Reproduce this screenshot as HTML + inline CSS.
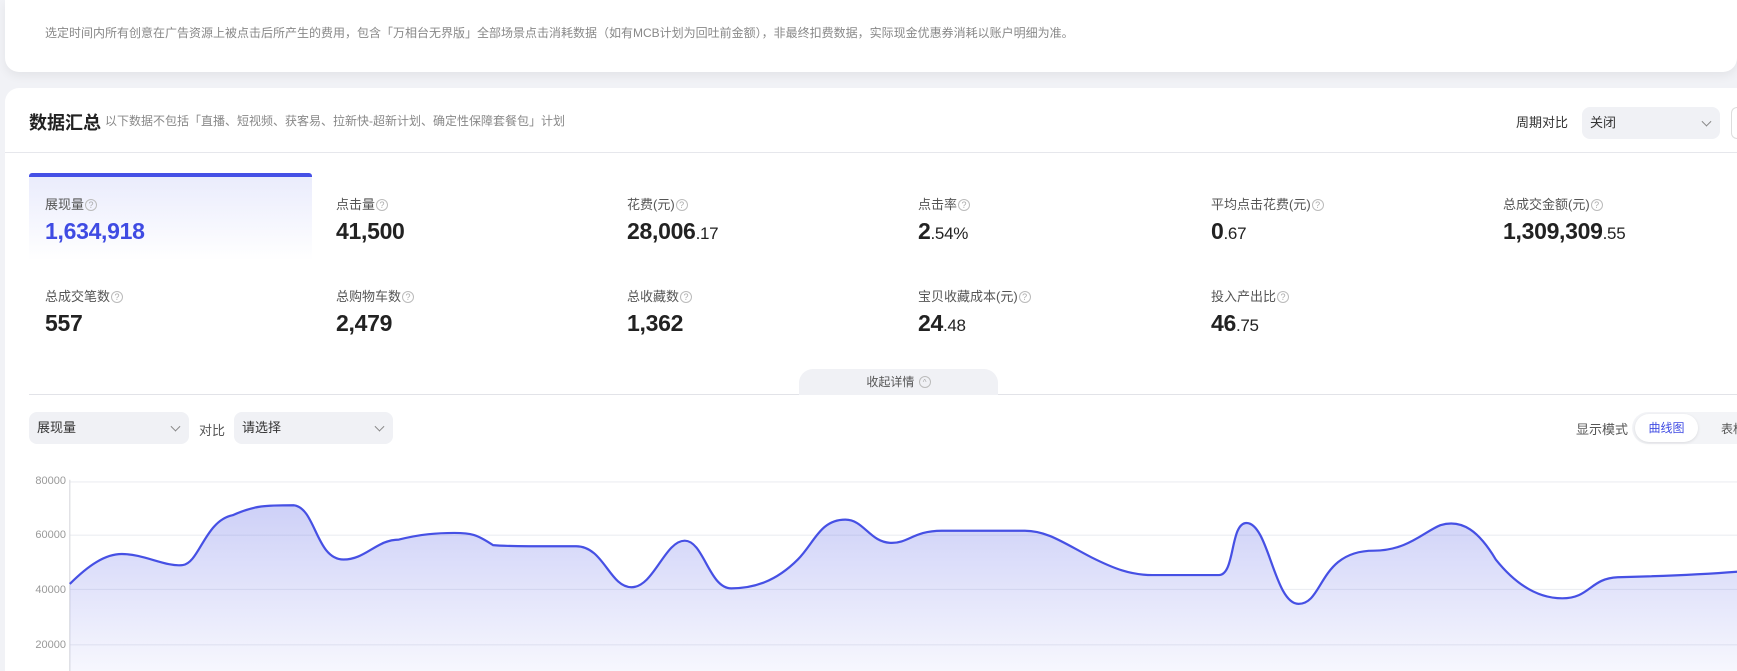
<!DOCTYPE html>
<html style="width:1737px;height:671px;overflow:hidden"><head><meta charset="utf-8"><style>
*{margin:0;padding:0;box-sizing:border-box}
body{width:1737px;height:671px;overflow:hidden;background:#f1f2f6;font-family:"Liberation Sans","Noto Sans CJK SC",sans-serif;color:#333;position:relative}
.a{position:absolute;white-space:nowrap}
.card1{position:absolute;left:5px;top:0;width:1732px;height:72px;background:#fff;border-radius:0 0 14px 14px;box-shadow:0 4px 10px rgba(0,0,0,.06)}
.card2{position:absolute;left:5px;top:88px;width:1732px;height:583px;background:#fff;border-radius:14px 0 0 0}
.lbl{font-size:13px;color:#555}
.q{display:inline-block;width:12px;height:12px;border:1px solid #bbb;border-radius:50%;font-size:9px;color:#aaa;text-align:center;line-height:10px;vertical-align:1px;margin-left:1px}
.val{font-size:23px;font-weight:bold;color:#222;letter-spacing:-0.3px}
.val small{font-size:17px;font-weight:normal}
.sel{position:absolute;background:#f0f1f5;border-radius:8px;font-size:13px;color:#333;padding-left:8px}
.arr{position:absolute;right:10px;top:50%;width:7px;height:7px;border-right:1px solid #888;border-bottom:1px solid #888;transform:translateY(-70%) rotate(45deg)}
.yl{font-size:11px;color:#999;right:1671px;text-align:right}
</style></head><body>
<div class="card1"></div>
<div class="a" style="left:45px;top:24px;font-size:12px;color:#888">选定时间内所有创意在广告资源上被点击后所产生的费用，包含「万相台无界版」全部场景点击消耗数据（如有MCB计划为回吐前金额），非最终扣费数据，实际现金优惠券消耗以账户明细为准。</div>
<div class="card2"></div>
<div class="a" style="left:29px;top:109px;font-size:18px;font-weight:bold;color:#222">数据汇总</div>
<div class="a" style="left:105px;top:112px;font-size:12px;color:#888">以下数据不包括「直播、短视频、获客易、拉新快-超新计划、确定性保障套餐包」计划</div>
<div class="a" style="left:1516px;top:112px;font-size:13px;color:#333">周期对比</div>
<div class="sel" style="left:1582px;top:107px;width:138px;height:32px;line-height:32px">关闭<span class="arr"></span></div>
<div class="a" style="left:1731px;top:107px;width:6px;height:32px;border:1px solid #ddd;border-right:none;border-radius:6px 0 0 6px"></div>
<div class="a" style="left:5px;top:152px;width:1732px;height:1px;background:#e6e7ec"></div>

<div class="a" style="left:29px;top:173px;width:283px;height:88px;border-radius:6px 6px 0 0;background:linear-gradient(#e9ebfc,#fff)"></div>
<div class="a" style="left:29px;top:173px;width:283px;height:4px;border-radius:3px 3px 0 0;background:#4550e6"></div>

<div class="a lbl" style="left:45px;top:194px">展现量<span class="q">?</span></div>
<div class="a val" style="left:45px;top:218px;color:#3f4be3">1,634,918</div>
<div class="a lbl" style="left:336px;top:194px">点击量<span class="q">?</span></div>
<div class="a val" style="left:336px;top:218px">41,500</div>
<div class="a lbl" style="left:627px;top:194px">花费(元)<span class="q">?</span></div>
<div class="a val" style="left:627px;top:218px">28,006<small>.17</small></div>
<div class="a lbl" style="left:918px;top:194px">点击率<span class="q">?</span></div>
<div class="a val" style="left:918px;top:218px">2<small>.54%</small></div>
<div class="a lbl" style="left:1211px;top:194px">平均点击花费(元)<span class="q">?</span></div>
<div class="a val" style="left:1211px;top:218px">0<small>.67</small></div>
<div class="a lbl" style="left:1503px;top:194px">总成交金额(元)<span class="q">?</span></div>
<div class="a val" style="left:1503px;top:218px">1,309,309<small>.55</small></div>

<div class="a lbl" style="left:45px;top:286px">总成交笔数<span class="q">?</span></div>
<div class="a val" style="left:45px;top:310px">557</div>
<div class="a lbl" style="left:336px;top:286px">总购物车数<span class="q">?</span></div>
<div class="a val" style="left:336px;top:310px">2,479</div>
<div class="a lbl" style="left:627px;top:286px">总收藏数<span class="q">?</span></div>
<div class="a val" style="left:627px;top:310px">1,362</div>
<div class="a lbl" style="left:918px;top:286px">宝贝收藏成本(元)<span class="q">?</span></div>
<div class="a val" style="left:918px;top:310px">24<small>.48</small></div>
<div class="a lbl" style="left:1211px;top:286px">投入产出比<span class="q">?</span></div>
<div class="a val" style="left:1211px;top:310px">46<small>.75</small></div>

<div class="a" style="left:29px;top:394px;width:1708px;height:1px;background:#e2e3e8"></div>
<div class="a" style="left:799px;top:369px;width:199px;height:26px;background:#f0f1f5;border-radius:14px 14px 0 0;text-align:center;font-size:12px;line-height:26px;color:#555">收起详情 <span class="q" style="font-size:8px;line-height:12px">^</span></div>

<div class="sel" style="left:29px;top:412px;width:160px;height:32px;line-height:32px">展现量<span class="arr"></span></div>
<div class="a" style="left:199px;top:420px;font-size:13px;color:#555">对比</div>
<div class="sel" style="left:234px;top:412px;width:159px;height:32px;line-height:32px">请选择<span class="arr"></span></div>
<div class="a" style="left:1576px;top:419px;font-size:13px;color:#555">显示模式</div>
<div class="a" style="left:1632px;top:412px;width:105px;height:32px;background:#f3f4f7;border-radius:16px 0 0 16px"></div>
<div class="a" style="left:1635px;top:414px;width:63px;height:28px;background:#fff;border-radius:14px;box-shadow:0 1px 3px rgba(0,0,0,.1);text-align:center;line-height:28px;font-size:12px;color:#3f4be3">曲线图</div>
<div class="a" style="left:1721px;top:420px;font-size:12px;color:#555">表格</div>

<div class="a yl" style="top:475px">80000</div>
<div class="a yl" style="top:529px">60000</div>
<div class="a yl" style="top:584px">40000</div>
<div class="a yl" style="top:639px">20000</div>

<svg class="a" style="left:0;top:0" width="1737" height="671" viewBox="0 0 1567.7 605.6" preserveAspectRatio="none">
<defs><linearGradient id="g" x1="0" y1="0" x2="0" y2="1"><stop offset="0" stop-color="#5a63e6" stop-opacity=".3"/><stop offset="1" stop-color="#5a63e6" stop-opacity=".05"/></linearGradient></defs>
<g stroke="#eceef2" stroke-width="1">
<line x1="63" y1="435" x2="1568" y2="435"/><line x1="63" y1="483" x2="1568" y2="483"/><line x1="63" y1="532" x2="1568" y2="532"/><line x1="63" y1="582" x2="1568" y2="582"/>
</g>
<line x1="63" y1="433" x2="63" y2="606" stroke="#d8d9de"/>
<path d="M63,527 C80,510 95,500 110,500 C130,500 150,512 165,510 C180,508 185,470 210,465 C230,456 240,456 265,456 C285,458 285,505 310,505 C330,505 340,487 360,487 C380,482 395,481 410,481 C425,481 430,482 445,492 C455,493 470,493 520,493 C545,493 550,530 570,530 C590,530 600,488 618,488 C635,488 640,531 660,531 C680,531 700,525 720,505 C735,490 740,469 763,469 C780,469 785,490 805,490 C820,490 825,479 850,479 L925,479 C945,479 960,490 985,503 C1005,513 1020,519 1040,519 L1100,519 C1115,519 1110,472 1125,472 C1145,472 1150,545 1172,545 C1195,545 1190,497 1240,497 C1270,497 1285,480 1300,474 C1320,468 1335,480 1350,505 C1370,530 1390,540 1410,540 C1435,540 1435,522 1460,521 C1500,520 1530,519 1568,516 L1568,606 L63,606 Z" fill="url(#g)"/>
<path d="M63,527 C80,510 95,500 110,500 C130,500 150,512 165,510 C180,508 185,470 210,465 C230,456 240,456 265,456 C285,458 285,505 310,505 C330,505 340,487 360,487 C380,482 395,481 410,481 C425,481 430,482 445,492 C455,493 470,493 520,493 C545,493 550,530 570,530 C590,530 600,488 618,488 C635,488 640,531 660,531 C680,531 700,525 720,505 C735,490 740,469 763,469 C780,469 785,490 805,490 C820,490 825,479 850,479 L925,479 C945,479 960,490 985,503 C1005,513 1020,519 1040,519 L1100,519 C1115,519 1110,472 1125,472 C1145,472 1150,545 1172,545 C1195,545 1190,497 1240,497 C1270,497 1285,480 1300,474 C1320,468 1335,480 1350,505 C1370,530 1390,540 1410,540 C1435,540 1435,522 1460,521 C1500,520 1530,519 1568,516" fill="none" stroke="#4650e4" stroke-width="2"/>
</svg>
</body></html>
